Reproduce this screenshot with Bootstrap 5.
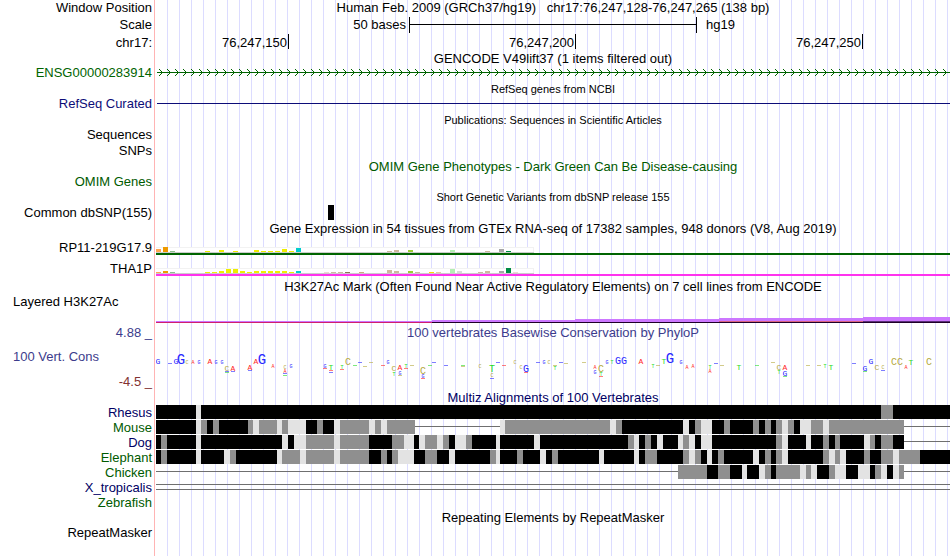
<!DOCTYPE html>
<html lang="en">

<head>
    <meta charset="UTF-8">
    <meta name="viewport" content="width=device-width, initial-scale=1">
    <title>Genome Browser - chr17:76,247,128-76,247,265</title>

    <!-- Bootstrap CSS -->
    <link href="https://cdn.jsdelivr.net/npm/bootstrap@5.3.2/dist/css/bootstrap.min.css" rel="stylesheet">

    <style>
        body {
            font-family: "Liberation Sans", Arial, sans-serif;
            font-size: 13px;
            line-height: 15px;
            color: #000;
        }

        /* red divider at the label edge, blue guide lines under the tracks */
        .browser {
            min-height: 100vh;
            background-image: linear-gradient(#ffb4b4, #ffb4b4),
                repeating-linear-gradient(90deg, transparent 0 11px, #dcdcff 11px 12px);
            background-position: 154px 0, 156px 0;
            background-size: 1px 100%, 100% 100%;
            background-repeat: no-repeat;
        }

        .track {
            min-height: 15px;
        }

        .tall {
            min-height: 17px;
        }

        .head {
            min-height: 16px;
            line-height: 16px;
        }

        .head-tall {
            min-height: 17px;
            line-height: 17px;
        }

        .head-small {
            font-size: 11px;
        }

        .side {
            width: 156px;
            padding-right: 4px;
            white-space: pre;
        }

        .side-start {
            padding-left: 13px;
        }

        .tight {
            line-height: 13px;
        }

        .gtex {
            min-height: 21px;
            line-height: 21px;
        }

        .signal {
            min-height: 29px;
        }

        .cons {
            min-height: 49px;
        }

        .plot svg {
            display: block;
            width: 100%;
            overflow: hidden;
        }

        .plot rect {
            shape-rendering: crispEdges;
        }

        #phylop text {
            font-family: "Liberation Mono", "Courier New", monospace;
        }

        .c-gene { color: #006400; }
        .c-refseq { color: #0c0c78; }
        .c-omim { color: #005a00; }
        .c-phylo { color: #3c3c8c; }
        .c-min { color: #823232; }
        .c-navy { color: #000064; }
    </style>
</head>

<body>

    <main class="browser">
        <!-- Position and ruler -->
        <div class="track tall d-flex">
            <div class="side flex-shrink-0 text-end">Window Position</div>
            <div class="flex-fill text-center">Human Feb. 2009 (GRCh37/hg19) &nbsp; chr17:76,247,128-76,247,265 (138 bp)</div>
        </div>
        <div class="track tall d-flex">
            <div class="side flex-shrink-0 text-end">Scale</div>
            <div class="plot flex-fill"><svg id="scale" height="17"></svg></div>
        </div>
        <div class="track head-tall d-flex">
            <div class="side flex-shrink-0 text-end">chr17:</div>
            <div class="plot flex-fill"><svg id="ruler" height="15"></svg></div>
        </div>

        <!-- Genes -->
        <div class="track d-flex">
            <div class="side flex-shrink-0"></div>
            <div class="flex-fill text-center">GENCODE V49lift37 (1 items filtered out)</div>
        </div>
        <div class="track d-flex">
            <div class="side flex-shrink-0 text-end tight c-gene">ENSG00000283914</div>
            <div class="plot flex-fill"><svg id="gencode" height="15"></svg></div>
        </div>
        <div class="track head head-small d-flex">
            <div class="side flex-shrink-0"></div>
            <div class="flex-fill text-center">RefSeq genes from NCBI</div>
        </div>
        <div class="track d-flex">
            <div class="side flex-shrink-0 text-end tight c-refseq">RefSeq Curated</div>
            <div class="plot flex-fill"><svg id="refseq" height="15"></svg></div>
        </div>

        <!-- Publications -->
        <div class="track head head-small d-flex">
            <div class="side flex-shrink-0"></div>
            <div class="flex-fill text-center">Publications: Sequences in Scientific Articles</div>
        </div>
        <div class="track d-flex">
            <div class="side flex-shrink-0 text-end tight">Sequences</div>
        </div>
        <div class="track head d-flex">
            <div class="side flex-shrink-0 text-end">SNPs</div>
        </div>

        <!-- Variants -->
        <div class="track head d-flex c-omim">
            <div class="side flex-shrink-0"></div>
            <div class="flex-fill text-center">OMIM Gene Phenotypes - Dark Green Can Be Disease-causing</div>
        </div>
        <div class="track d-flex c-omim">
            <div class="side flex-shrink-0 text-end tight">OMIM Genes</div>
        </div>
        <div class="track head-small d-flex">
            <div class="side flex-shrink-0"></div>
            <div class="flex-fill text-center">Short Genetic Variants from dbSNP release 155</div>
        </div>
        <div class="track d-flex">
            <div class="side flex-shrink-0 text-end">Common dbSNP(155)</div>
            <div class="plot flex-fill"><svg id="dbsnp" height="15"></svg></div>
        </div>

        <!-- Expression -->
        <div class="track head-tall d-flex">
            <div class="side flex-shrink-0"></div>
            <div class="flex-fill text-center">Gene Expression in 54 tissues from GTEx RNA-seq of 17382 samples, 948 donors (V8, Aug 2019)</div>
        </div>
        <div class="track gtex d-flex">
            <div class="side flex-shrink-0 text-end">RP11-219G17.9</div>
            <div class="plot flex-fill"><svg id="gtex1" height="21"></svg></div>
        </div>
        <div class="track gtex d-flex">
            <div class="side flex-shrink-0 text-end">THA1P</div>
            <div class="plot flex-fill"><svg id="gtex2" height="21"></svg></div>
        </div>

        <!-- Regulation -->
        <div class="track head d-flex">
            <div class="side flex-shrink-0"></div>
            <div class="flex-fill text-center">H3K27Ac Mark (Often Found Near Active Regulatory Elements) on 7 cell lines from ENCODE</div>
        </div>
        <div class="track signal d-flex">
            <div class="side side-start flex-shrink-0 tight">Layered H3K27Ac</div>
            <div class="plot flex-fill"><svg id="h3k27ac" height="29"></svg></div>
        </div>

        <!-- Conservation -->
        <div class="track head-tall d-flex c-phylo">
            <div class="side flex-shrink-0 text-end">4.88 _</div>
            <div class="flex-fill text-center">100 vertebrates Basewise Conservation by PhyloP</div>
        </div>
        <div class="track cons d-flex">
            <div class="side flex-shrink-0 d-flex flex-column justify-content-between pt-2">
                <div class="side-start c-phylo">100 Vert. Cons</div>
                <div class="head-tall c-min text-end">-4.5 _</div>
            </div>
            <div class="plot flex-fill"><svg id="phylop" height="49"></svg></div>
        </div>

        <!-- Alignments -->
        <div class="track d-flex c-navy">
            <div class="side flex-shrink-0"></div>
            <div class="flex-fill text-center">Multiz Alignments of 100 Vertebrates</div>
        </div>
        <div id="multiz"></div>

        <!-- Repeats -->
        <div class="track head d-flex">
            <div class="side flex-shrink-0"></div>
            <div class="flex-fill text-center">Repeating Elements by RepeatMasker</div>
        </div>
        <div class="track d-flex">
            <div class="side flex-shrink-0 text-end tight">RepeatMasker</div>
        </div>
    </main>

    <script>
        // Track coordinates run over 794 units and scale with the panel
        const WIDTH = 794;

        function pct(x) {
            return (x / WIDTH * 100) + '%';
        }

        function rect(x, y, w, h, fill) {
            return `<rect x="${pct(x)}" y="${y}" width="${pct(w)}" height="${h}" fill="${fill}"/>`;
        }

        function text(x, y, anchor, str, size, fill) {
            return `<text x="${pct(x)}" y="${y}" text-anchor="${anchor}" font-size="${size || 13}" fill="${fill || '#000'}">${str}</text>`;
        }

        function draw(id, markup) {
            document.getElementById(id).innerHTML = markup;
        }

        // Scale bar and ruler
        draw('scale', text(250, 12, 'end', '50 bases') + rect(253, 0, 1, 16, '#000') +
            rect(253, 7, 288, 1, '#000') + rect(540, 0, 1, 16, '#000') + text(550, 12, 'start', 'hg19'));

        let ticks = [[132, '76,247,150'], [419, '76,247,200'], [706, '76,247,250']];
        draw('ruler', ticks.map(t => text(t[0] - 1, 13, 'end', t[1]) + rect(t[0], 0, 1, 15, '#000')).join(''));

        // Gene lines
        draw('gencode', `<defs><pattern id="arrows" width="8" height="15" patternUnits="userSpaceOnUse">
            <path d="M3 3L6.5 6.5L3 10" fill="none" stroke="#006400"/></pattern></defs>
            <rect width="100%" height="15" fill="url(#arrows)"/>` + rect(1, 6, 793, 1, '#006400'));
        draw('refseq', rect(1, 6, 793, 1, '#0c0c78'));
        draw('dbsnp', rect(172, 0, 6, 15, '#000'));

        // GTEx bars: [tissue, height, colour]
        const YEL = '#eeee00', TAN = '#cdb79e';
        let rp11 = [[0, 3, '#ffa54f'], [1, 5, '#ee9a00'], [2, 1, '#8fbc8f'], [7, 1, YEL], [9, 2, YEL], [11, 1, YEL],
            [14, 2, YEL], [15, 1, YEL], [16, 1, YEL], [17, 1, YEL], [18, 3, YEL], [19, 1, YEL], [20, 4, '#00cdcd'],
            [33, 1, TAN], [34, 2, TAN], [36, 2, '#9acd32'], [42, 2, '#b4eeb4'], [47, 1, TAN], [49, 3, '#a6a6a6'], [50, 1, '#008b45']];
        let tha1p = [[0, 1, '#ffa54f'], [1, 2, '#ee9a00'], [2, 1, '#8fbc8f'], [7, 1, YEL], [8, 1, YEL], [9, 2, YEL],
            [10, 4, YEL], [11, 4, YEL], [12, 2, YEL], [13, 1, YEL], [14, 2, YEL], [15, 2, YEL], [16, 2, YEL], [17, 2, YEL],
            [18, 2, YEL], [19, 1, YEL], [20, 2, '#00cdcd'], [24, 1, '#eed5d2'], [25, 1, TAN], [26, 1, TAN], [27, 1, '#8b7355'],
            [29, 1, '#cdaa7d'], [33, 3, TAN], [34, 2, TAN], [36, 2, '#9acd32'], [37, 1, TAN], [39, 1, '#ffd700'], [40, 1, '#e6c8a0'],
            [42, 4, '#b4eeb4'], [43, 2, '#d9d9d9'], [46, 1, TAN], [47, 2, TAN], [49, 2, '#a6a6a6'], [50, 5, '#008b45'], [51, 1, '#eed5d2']];

        function gtex(id, bars, base, line) {
            draw(id, rect(0, base - 5, 378, 6, '#f2f2f2') + rect(0, base - 4, 377, 4, '#fff') + rect(0, base, 378, 1, '#ccc') +
                bars.map(b => rect(b[0] * 7, base - b[1], 5, b[1], b[2])).join('') + rect(0, base + 1, 794, 2, line));
        }
        gtex('gtex1', rp11, 15, '#006400');
        gtex('gtex2', tha1p, 15, '#ff33ee');

        // H3K27Ac signal steps
        draw('h3k27ac', rect(0, 26, 276, 1, '#cc77ff') + rect(0, 27, 276, 1, '#d0206e') +
            rect(276, 25, 143, 2, '#cc77ff') + rect(419, 24, 144, 3, '#cc77ff') +
            rect(563, 23, 144, 3, '#cc77ff') + rect(563, 26, 144, 1, '#d8607c') +
            rect(707, 22, 87, 4, '#cc77ff') + rect(707, 26, 87, 1, '#5a2d78') + rect(276, 27, 518, 1, '#1e0028'));

        // PhyloP letters: base, left, top, height
        let logo = `G 0 18 6,G 12 23 1,G 18 19 5,G 23 12 12,C 29 20 4,A 35 21 3,G 41 21 3,A 52 19 5,G 58 21 3,G 64 20 4,
            C 69 25 6,G 69 31 1,T 69 32 1,A 75 25 6,G 75 31 2,A 92 25 5,G 92 30 1,A 98 18 6,G 104 12 12,A 115 25 3,
            C 127 25 4,A 127 30 3,G 127 33 2,T 127 35 1,G 133 25 3,G 167 25 3,A 167 28 2,T 173 25 5,A 173 30 2,G 173 32 1,
            T 184 25 4,A 184 29 1,C 190 17 8,T 197 25 1,G 202 22 2,C 207 26 1,C 213 22 2,A 225 25 1,G 230 20 4,
            C 236 25 6,T 236 32 4,A 242 25 5,G 242 31 4,C 242 35 1,T 248 25 3,A 248 28 1,C 254 25 1,
            C 265 26 8,G 265 35 3,A 265 38 1,T 272 25 1,G 276 22 2,G 288 25 2,T 305 25 1,C 305 26 1,C 322 25 3,
            T 334 25 7,C 334 33 4,G 334 38 1,G 340 22 2,A 346 25 1,C 357 21 3,C 363 25 4,G 368 25 7,A 368 32 2,
            G 380 22 2,G 386 21 3,C 391 21 3,C 397 25 2,T 397 27 3,G 403 22 2,C 408 23 1,C 426 22 2,
            A 437 25 4,G 437 30 4,C 443 25 7,T 443 33 3,A 443 36 1,G 449 21 3,T 454 21 3,G 460 16 8,G 466 16 8,A 483 18 6,
            T 495 25 3,C 500 25 1,T 506 19 5,G 512 9 14,G 523 21 3,A 529 25 4,A 535 25 3,T 552 25 4,A 552 30 3,
            G 558 23 1,C 564 25 1,T 581 25 5,T 599 25 1,C 615 22 2,C 621 25 5,T 621 31 3,A 627 25 5,G 627 31 5,T 627 36 2,
            C 650 25 2,C 661 25 1,T 667 25 3,T 673 25 5,G 696 23 1,G 707 25 6,T 707 31 1,G 713 19 5,C 719 25 5,
            C 725 25 4,G 725 30 1,C 736 18 7,C 742 18 7,A 748 25 4,T 753 19 6,C 771 17 8`;
        const BASE = { G: '#2828ff', A: '#ff2828', C: '#b4a83c', T: '#28dc28' };

        draw('phylop', logo.split(',').map(function (item) {
            let [base, x, y, h] = item.trim().split(' ');
            x = +x; y = +y - 1; h = +h;
            // very low scores are only a dash
            if (h < 3) return `<g opacity=".6">${rect(x, y, 4, 1, BASE[base])}</g>`;
            let size = h > 8 ? 14 : h > 6 ? 10 : h > 4 ? 8 : 5;
            return text(x + 2, y + h, 'middle', base, size, BASE[base]);
        }).join(''));

        // Alignments: shade and end of each run, "-" is a gap line
        let species = [
            ['Rhesus', 'c-navy', 'K40 L45 K725 G737 K794'],
            ['Mouse', 'c-omim', 'K40 L45 G51 K57 G63 K92 G97 L103 G121 L126 G132 L150 K161 G167 K178 L184 G213 L219 G225 L231 G259 -344 L349 G454 L460 G466 K527 L533 K539 G545 L556 K568 G574 K597 G603 K609 G615 K620 G626 L632 G638 K644 L655 G667 L673 G748 -794'],
            ['Dog', 'c-navy', 'K5 G11 K40 L45 K126 L132 K138 L150 G178 L184 G213 K236 G248 L258 K263 L269 G281 L287 G293 K299 L310 G316 K340 L344 K378 L384 K472 G478 L483 K489 G495 K501 L507 K522 L527 G533 L539 K545 L556 K620 G626 L632 K650 L655 K667 G673 K679 G684 K708 L714 G719 K725 G737 K748 -794'],
            ['Elephant', 'c-omim', 'K5 G11 K40 L45 K68 L74 G80 K121 L126 G144 L150 G178 L184 G213 K225 G231 K236 G242 L258 K269 G281 K293 L299 K334 G340 L344 K361 G367 K384 L390 K396 G402 K443 L448 K478 L483 K489 G501 K527 G533 L539 G545 K551 L556 K562 G568 K597 L603 K609 G615 K620 G626 L632 K667 G673 L679 G684 L690 K708 G714 K725 G737 L743 G764 K794'],
            ['Chicken', 'c-omim', '-522 G551 K562 G574 K586 L591 K603 L609 G615 K620 G644 L650 G655 L661 K673 G679 L690 K702 L714 K719 G725 L731 K737 L743 G748 -794'],
            ['X_tropicalis', 'c-navy', '=794'],
            ['Zebrafish', 'c-omim', '']
        ];
        const SHADE = { K: '#000', G: '#8f8f8f', L: '#e3e3e3' };

        function alignment(runs) {
            let start = 0;
            return runs.split(' ').filter(Boolean).map(function (run) {
                let type = run[0], end = +run.slice(1), w = end - start, out;
                if (type === '-') out = rect(start, 6, w, 1, '#6f6f6f');
                else if (type === '=') out = rect(start, 4, w, 1, '#6f6f6f') + rect(start, 9, w, 1, '#6f6f6f');
                else out = rect(start, 0, w, 14, SHADE[type]);
                start = end;
                return out;
            }).join('');
        }

        document.getElementById('multiz').innerHTML = species.map(s => `
            <div class="track d-flex">
                <div class="side flex-shrink-0 text-end ${s[1]}">${s[0]}</div>
                <div class="plot flex-fill"><svg height="15">${alignment(s[2])}</svg></div>
            </div>`).join('');
    </script>

    <!-- Bootstrap JS -->
    <script src="https://cdn.jsdelivr.net/npm/bootstrap@5.3.2/dist/js/bootstrap.bundle.min.js"></script>
</body>

</html>
